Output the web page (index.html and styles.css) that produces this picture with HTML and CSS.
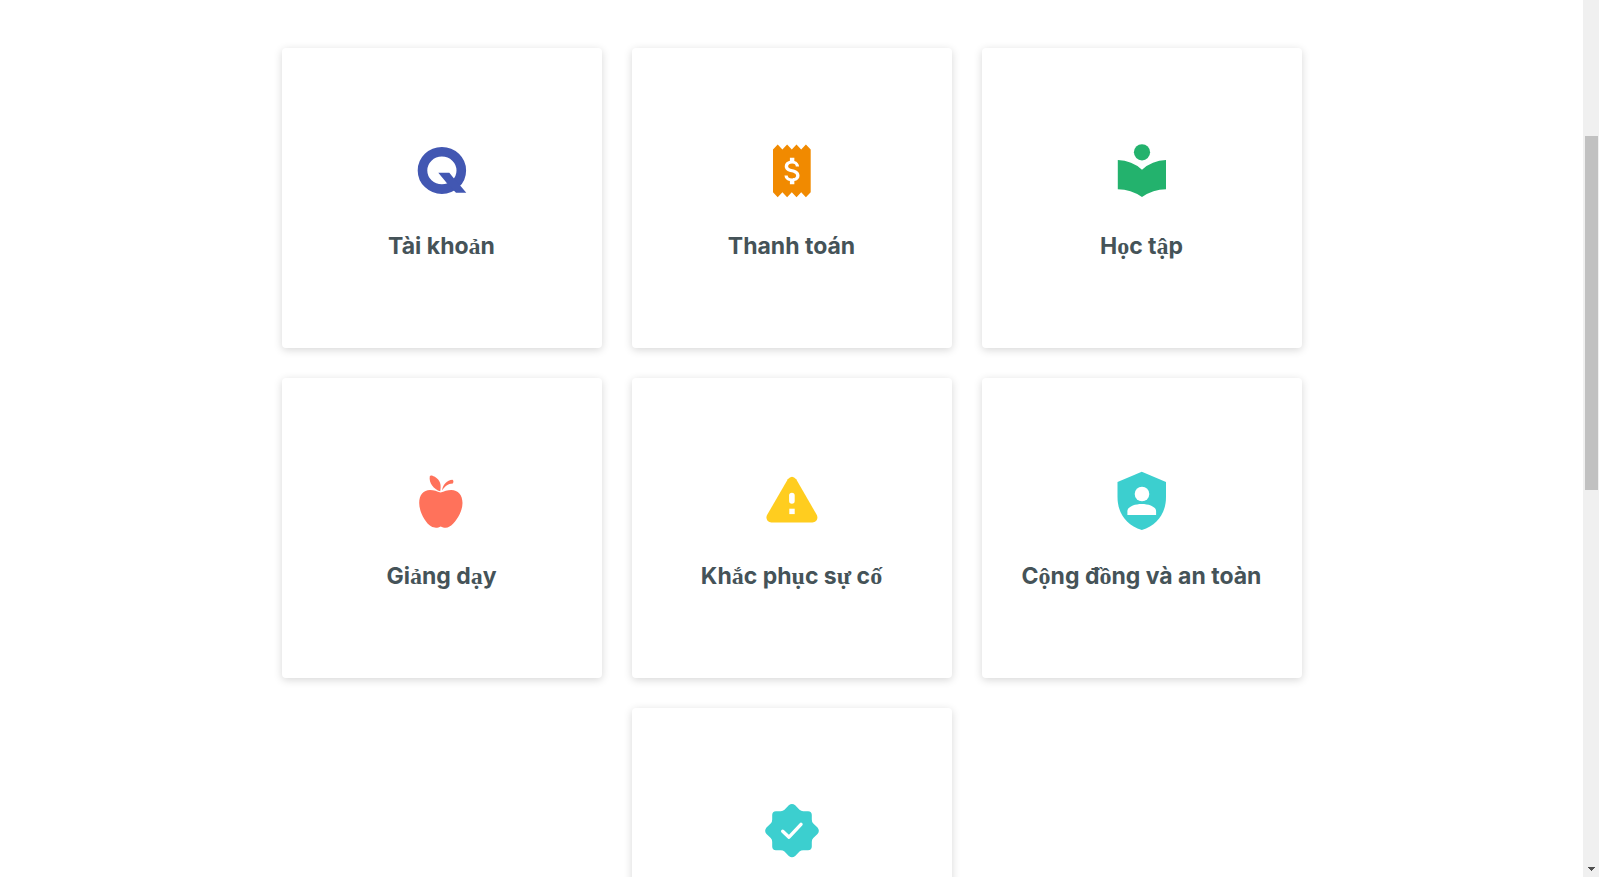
FILE: index.html
```html
<!DOCTYPE html>
<html lang="vi">
<head>
<meta charset="utf-8">
<meta name="viewport" content="width=device-width, initial-scale=1">
<title>Quizlet</title>
<link rel="stylesheet" href="styles.css">
</head>
<body>
<main class="content">
  <nav class="topics">
    <a class="card" href="#account">
      <svg class="icon blue" viewBox="0 0 64 64" aria-hidden="true">
        <ellipse cx="31.9" cy="31.4" rx="19.4" ry="18.7" fill="none" stroke="currentColor" stroke-width="9.6"/>
        <path d="M28.3 33.7H39.3L44 39.5L49.5 45.8L56.3 53.8H46L43.3 51L37.2 44.5Z"/>
      </svg>
      <span class="title">Tài kho<span class="alt">ả</span>n</span>
    </a>
    <a class="card" href="#billing">
      <svg class="icon orange" viewBox="0 0 64 64" aria-hidden="true">
        <path d="M13 10.4l4.7-5 4.7 5 4.7-5 4.7 5 4.7-5 4.7 5 4.7-5 4.8 5V53.3l-4.8 5-4.7-5-4.7 5-4.7-5-4.7 5-4.7-5-4.7 5-4.7-5Z"/>
        <path class="white" transform="translate(15.1 14.2) scale(1.48)" d="M11.8 10.9c-2.27-.59-3-1.2-3-2.15 0-1.09 1.01-1.85 2.7-1.85 1.78 0 2.44.85 2.5 2.1h2.21c-.07-1.72-1.12-3.3-3.21-3.81V3h-3v2.16c-1.94.42-3.5 1.68-3.5 3.61 0 2.31 1.91 3.46 4.7 4.13 2.5.6 3 1.48 3 2.41 0 .69-.49 1.79-2.7 1.79-2.06 0-2.87-.92-2.98-2.1h-2.2c.12 2.19 1.76 3.42 3.68 3.83V21h3v-2.15c1.95-.37 3.5-1.5 3.5-3.55 0-2.84-2.43-3.81-4.7-4.4z"/>
      </svg>
      <span class="title">Thanh toán</span>
    </a>
    <a class="card" href="#studying">
      <svg class="icon green" viewBox="0 0 64 64" aria-hidden="true">
        <circle cx="32" cy="13.3" r="8.1"/>
        <path d="M7.8 21Q22 21.5 32 30.7Q42 21.5 56 21V50.3Q43 50.5 32 58Q21 50.5 7.8 50.3Z"/>
      </svg>
      <span class="title">H<span class="alt">ọ</span>c t<span class="alt">ậ</span>p</span>
    </a>
    <a class="card" href="#teaching">
      <svg class="icon coral" viewBox="0 0 64 64" aria-hidden="true">
        <path d="M30.5 23.6C27 22.3 24 21 20 21C13.5 21 9.2 26 9.2 34C9.2 43 15.5 54 21 57.3C25 59.6 28 58.8 30.7 57.4C33.5 58.8 36.5 59.6 39.5 57.6C45 54.5 52.5 43.5 52.5 34C52.5 26 48 21 41.3 21C37.5 21 34 22.3 30.5 23.6Z"/>
        <path d="M30.2 22.2C23.8 20.5 18.6 13.8 19.8 7.2C20.4 6 22.3 6.6 24.4 7.6C30.8 11 31.3 16.8 30.2 22.2Z"/>
        <path d="M32 21.5C33 15.5 37 11 42.5 10.8C43.8 11.5 43.6 13.4 42.8 14.5C37.7 14.7 35 17.5 32 21.5Z"/>
      </svg>
      <span class="title">Gi<span class="alt">ả</span>ng d<span class="alt">ạ</span>y</span>
    </a>
    <a class="card" href="#troubleshooting">
      <svg class="icon yellow" viewBox="0 0 64 64" aria-hidden="true">
        <path d="M27.8 10.2Q32 5.2 36.2 10.2L56.7 45.8C58.6 49.4 56.3 53.4 52.4 53.4H11.4C7.5 53.4 5.2 49.4 7.2 45.8Z"/>
        <rect class="white" x="29.1" y="23.8" width="5.6" height="11" rx="2.8"/>
        <rect class="white" x="29.3" y="39.7" width="5.4" height="5.4"/>
      </svg>
      <span class="title">Kh<span class="alt">ắ</span>c ph<span class="alt">ụ</span>c s<span class="alt">ự</span> c<span class="alt">ố</span></span>
    </a>
    <a class="card" href="#community">
      <svg class="icon teal" viewBox="0 0 64 64" aria-hidden="true">
        <path d="M31.8 2.8L56 13V28C56 44 47.5 56 31.8 61C16 56 7.5 44 7.5 28V13Z"/>
        <circle class="white" cx="32" cy="25" r="7.3"/>
        <path class="white" d="M17.4 46V42.2C17.4 37.5 25 35 31.8 35S46.1 37.5 46.1 42.2V46Z"/>
      </svg>
      <span class="title">C<span class="alt">ộ</span>ng đ<span class="alt">ồ</span>ng và an toàn</span>
    </a>
    <a class="card" href="#verified">
      <svg class="icon teal" viewBox="0 0 64 64" aria-hidden="true">
        <path d="M28.8 6.3Q32 3.6 35.2 6.3L39.5 10.8Q41.3 12.4 43.7 12.2H48Q51.8 12.4 51.8 16V20.5Q51.7 22.8 53.3 24.4L57.5 28.4Q60.2 31.7 57.5 34.9L53.3 39Q51.7 40.6 51.8 42.9V47.4Q51.8 51 48 51.2H43.7Q41.3 51 39.5 52.6L35.2 57Q32 59.7 28.8 57L24.5 52.6Q22.7 51 20.3 51.2H16Q12.2 51 12.2 47.4V42.9Q12.3 40.6 10.7 39L6.5 34.9Q3.8 31.7 6.5 28.4L10.7 24.4Q12.3 22.8 12.2 20.5V16Q12.2 12.4 16 12.2H20.3Q22.7 12.4 24.5 10.8Z"/>
        <path class="tick" d="M22.7 32.2L29 38.2L41 25.3"/>
      </svg>
    </a>
  </nav>
</main>
<div class="scrollbar" aria-hidden="true">
  <div class="thumb"></div>
  <svg class="arrow" viewBox="0 0 7 4" shape-rendering="crispEdges"><path d="M0 0H7V1H6V2H5V3H4V4H3V3H2V2H1V1H0Z"/></svg>
</div>
</body>
</html>
```
FILE: styles.css
```css
* {
  box-sizing: border-box;
}

body {
  margin: 0;
  height: 100vh;
  display: flex;
  overflow: hidden;
  background: #fff;
  color: #455358;
  font-family: Inter, "Open Sans", sans-serif;
}

.content {
  flex: 1;
  overflow: hidden;
  padding: 48px 24px;
}

.topics {
  display: flex;
  flex-wrap: wrap;
  justify-content: center;
  gap: 30px;
  max-width: 1020px;
  margin: 0 auto;
}

.card {
  flex: 0 0 320px;
  min-height: 300px;
  padding-top: 91px;
  display: flex;
  flex-direction: column;
  align-items: center;
  gap: 24px;
  border-radius: 4px;
  background: #fff;
  box-shadow: 0 2px 8px rgba(0, 0, 0, 0.16);
  color: inherit;
  text-decoration: none;
}

.icon {
  width: 64px;
  height: 64px;
  fill: currentColor;
}

.title {
  font-size: 23px;
  font-weight: 700;
  line-height: 38px;
}

.alt {
  font-family: "Liberation Serif", serif;
  font-size: 24px;
  line-height: 1;
}

.blue { color: #4257b2; }
.orange { color: #f18a00; }
.green { color: #23b26d; }
.coral { color: #ff725b; }
.yellow { color: #ffcd1f; }
.teal { color: #3ccfcf; }
.white { fill: #fff; }

.tick {
  fill: none;
  stroke: #fff;
  stroke-width: 3.4;
  stroke-linecap: round;
  stroke-linejoin: round;
}

.scrollbar {
  flex: 0 0 16px;
  display: flex;
  flex-direction: column;
  align-items: center;
  justify-content: space-between;
  padding: 136px 1px 6px 2px;
  background: #f0f0f0;
}

.thumb {
  width: 100%;
  height: 354px;
  background: #c1c1c1;
}

.arrow {
  width: 7px;
  height: 4px;
  fill: #505050;
}
```
